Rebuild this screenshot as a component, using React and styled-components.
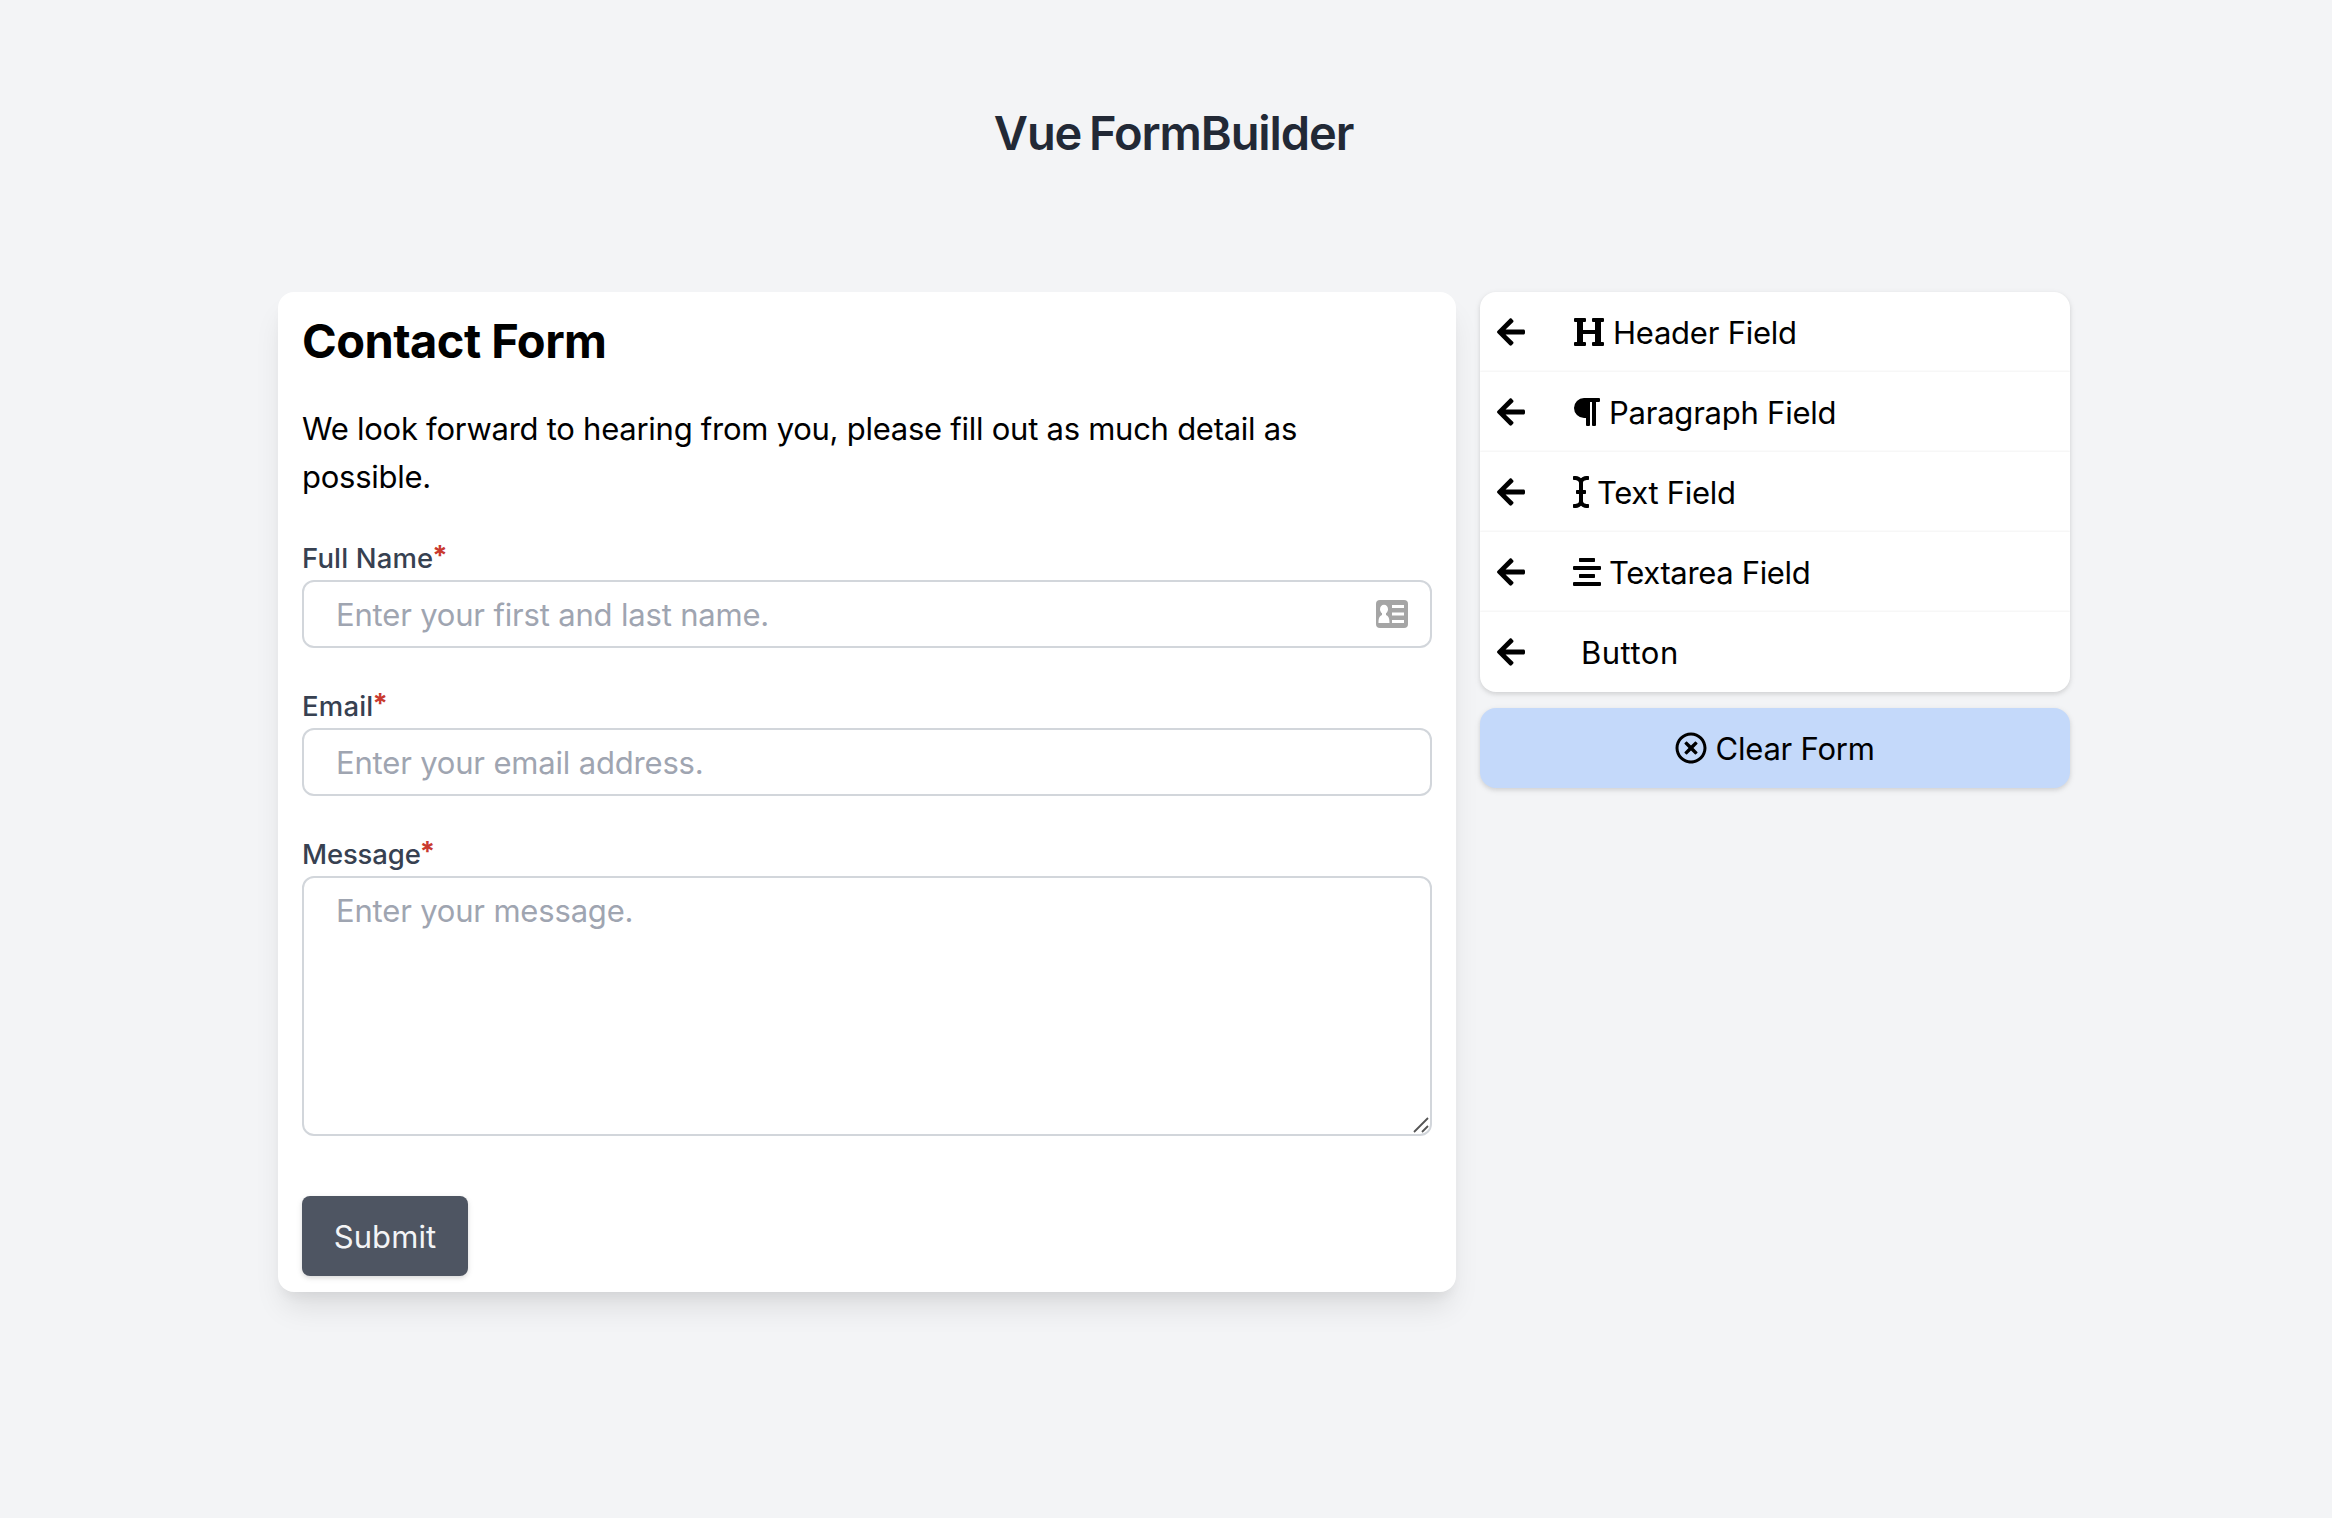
import React from "react";
import styled, { createGlobalStyle } from "styled-components";
import {
  FaArrowLeft,
  FaHeading,
  FaParagraph,
  FaICursor,
  FaAlignCenter,
  FaRegTimesCircle,
} from "react-icons/fa";

const GlobalStyle = createGlobalStyle`
  *, *::before, *::after { box-sizing: border-box; }
  body {
    margin: 0;
    min-height: 100vh;
    background: #f3f4f6;
    color: #000;
    font-family: Inter, "Liberation Sans", sans-serif;
    font-size: 31px;
    line-height: 48px;
  }
`;

const Page = styled.main`
  width: 1792px;
  margin-left: 278px;
  padding-top: 106px;
`;

const Title = styled.h1`
  margin: 0 0 132px;
  padding-right: 1px;
  text-align: center;
  font-size: 47px;
  font-weight: 600;
  line-height: 54px;
  letter-spacing: -1.1px;
  word-spacing: -3px;
  color: #222936;
`;

const Columns = styled.div`
  display: grid;
  grid-template-columns: 1178px 590px;
  gap: 24px;
  align-items: start;
`;

const FormCard = styled.form`
  display: flex;
  flex-direction: column;
  padding: 19px 24px 16px;
  background: #fff;
  border-radius: 16px;
  box-shadow: 0 20px 30px -6px rgba(0, 0, 0, 0.1), 0 8px 12px -4px rgba(0, 0, 0, 0.05);
`;

const FormHeading = styled.h2`
  margin: 0 0 34px;
  font-size: 47px;
  font-weight: 700;
  line-height: 60px;
  letter-spacing: -0.55px;
`;

const Intro = styled.p`
  margin: 0 0 36px;
  letter-spacing: -0.26px;
`;

const Field = styled.div`
  display: flex;
  flex-direction: column;
  margin-bottom: ${(p) => p.$gap}px;
`;

const Label = styled.label`
  margin-bottom: 1px;
  font-size: 27.5px;
  font-weight: 500;
  line-height: 42px;
  letter-spacing: ${(p) => p.$tracking}px;
  color: #374151;
`;

const Required = styled.span`
  position: relative;
  top: -3px;
  left: -1px;
  font-weight: 700;
  color: #c93a2f;
`;

const Control = styled.div`
  position: relative;
  display: flex;
`;

const TextInput = styled.input`
  width: 100%;
  height: 68px;
  padding: 8px 32px;
  border: 2px solid #d2d6db;
  border-radius: 12px;
  outline: none;
  background: #fff;
  font: inherit;
  line-height: 48px;
  letter-spacing: -0.18px;

  &::placeholder {
    color: #9fa5b1;
    opacity: 1;
  }
`;

const MessageInput = styled(TextInput)`
  height: 260px;
  padding-top: 9px;
  resize: none;
`;

const ContactBadge = styled.svg`
  position: absolute;
  right: 24px;
  top: 20px;
  width: 32px;
  height: 28px;
`;

const Grip = styled.svg`
  position: absolute;
  right: 3px;
  bottom: 3px;
  width: 16px;
  height: 16px;
`;

const SubmitButton = styled.button`
  align-self: flex-start;
  width: 166px;
  height: 80px;
  padding: 1px 0 0;
  border: 0;
  border-radius: 8px;
  background: #4e5562;
  color: #f3f4f6;
  font: inherit;
  letter-spacing: 0.1px;
  box-shadow: 0 2px 6px rgba(0, 0, 0, 0.1), 0 2px 4px rgba(0, 0, 0, 0.06);
`;

const Sidebar = styled.aside`
  display: flex;
  flex-direction: column;
  gap: 16px;
`;

const FieldList = styled.ul`
  margin: 0;
  padding: 0;
  list-style: none;
  overflow: hidden;
  background: #fff;
  border-radius: 16px;
  box-shadow: 0 2px 6px rgba(0, 0, 0, 0.1), 0 2px 4px rgba(0, 0, 0, 0.06);
`;

const FieldItem = styled.li`
  display: flex;
  align-items: center;
  height: 80px;
  padding-left: 16.7px;
  letter-spacing: ${(p) => p.$tracking}px;

  & + & {
    box-shadow: 0 -1px 2px rgba(0, 0, 0, 0.05);
  }
`;

const Caption = styled.span`
  padding-top: 1px;
`;

const ArrowSlot = styled.span`
  display: flex;
  width: 76px;

  svg {
    width: 28px;
    height: 32px;
  }
`;

const IconSlot = styled.span`
  display: flex;
  margin-left: ${(p) => p.$shift || 0}px;
  margin-right: ${(p) => 8.3 - (p.$shift || 0)}px;

  svg {
    width: ${(p) => p.$width}px;
    height: 32px;
  }
`;

const ClearButton = styled.button`
  display: flex;
  align-items: center;
  justify-content: center;
  height: 80px;
  padding: 0;
  border: 0;
  border-radius: 16px;
  background: #c4d9fa;
  color: #000;
  font: inherit;
  letter-spacing: -0.2px;
  box-shadow: 0 2px 6px rgba(0, 0, 0, 0.1), 0 2px 4px rgba(0, 0, 0, 0.06);
`;

const palette = [
  { name: "Header Field", icon: FaHeading, width: 32, tracking: -0.23 },
  { name: "Paragraph Field", icon: FaParagraph, width: 28, shift: -1, tracking: -0.23 },
  { name: "Text Field", icon: FaICursor, width: 16, tracking: -0.3 },
  { name: "Textarea Field", icon: FaAlignCenter, width: 28, tracking: -0.35 },
  { name: "Button", icon: null, width: 0, tracking: 0.5 },
];

function FormField({ id, label, tracking, gap = 37, children }) {
  return (
    <Field $gap={gap}>
      <Label htmlFor={id} $tracking={tracking}>
        {label}
        <Required>*</Required>
      </Label>
      <Control>{children}</Control>
    </Field>
  );
}

export default function App() {
  return (
    <>
      <GlobalStyle />
      <Page>
        <Title>Vue FormBuilder</Title>
        <Columns>
          <FormCard onSubmit={(e) => e.preventDefault()}>
            <FormHeading>Contact Form</FormHeading>
            <Intro>
              We look forward to hearing from you, please fill out as much detail as possible.
            </Intro>
            <FormField id="name" label="Full Name" tracking={0.15}>
              <TextInput id="name" placeholder="Enter your first and last name." />
              <ContactBadge viewBox="0 0 32 28">
                <rect width="32" height="28" rx="4" fill="#a5a5a5" />
                <ellipse cx="8" cy="9.300" rx="4" ry="4.600" fill="#fff" />
                <path d="M6 12h4v3c2.500 1 3.500 3 3.500 8H2.500c0-5 1-7 3.500-8z" fill="#fff" />
                <path d="M16 5h12v3H16zM16 12.500h12v3H16zM16 20h12v3H16z" fill="#fff" />
              </ContactBadge>
            </FormField>
            <FormField id="email" label="Email" tracking={0.2}>
              <TextInput id="email" placeholder="Enter your email address." />
            </FormField>
            <FormField id="message" label="Message" tracking={-0.15} gap={60}>
              <MessageInput as="textarea" id="message" placeholder="Enter your message." />
              <Grip viewBox="0 0 16 16" fill="none" stroke="#555" strokeWidth="1.8">
                <path d="M1 15L15 1M9 15l6-6" />
              </Grip>
            </FormField>
            <SubmitButton type="submit">Submit</SubmitButton>
          </FormCard>
          <Sidebar>
            <FieldList>
              {palette.map(({ name, icon: Icon, width, shift, tracking }) => (
                <FieldItem key={name} $tracking={tracking}>
                  <ArrowSlot>
                    <FaArrowLeft />
                  </ArrowSlot>
                  <IconSlot $width={width} $shift={shift}>{Icon && <Icon />}</IconSlot>
                  <Caption>{name}</Caption>
                </FieldItem>
              ))}
            </FieldList>
            <ClearButton type="button">
              <IconSlot $width={32}>
                <FaRegTimesCircle />
              </IconSlot>
              <Caption>Clear Form</Caption>
            </ClearButton>
          </Sidebar>
        </Columns>
      </Page>
    </>
  );
}
